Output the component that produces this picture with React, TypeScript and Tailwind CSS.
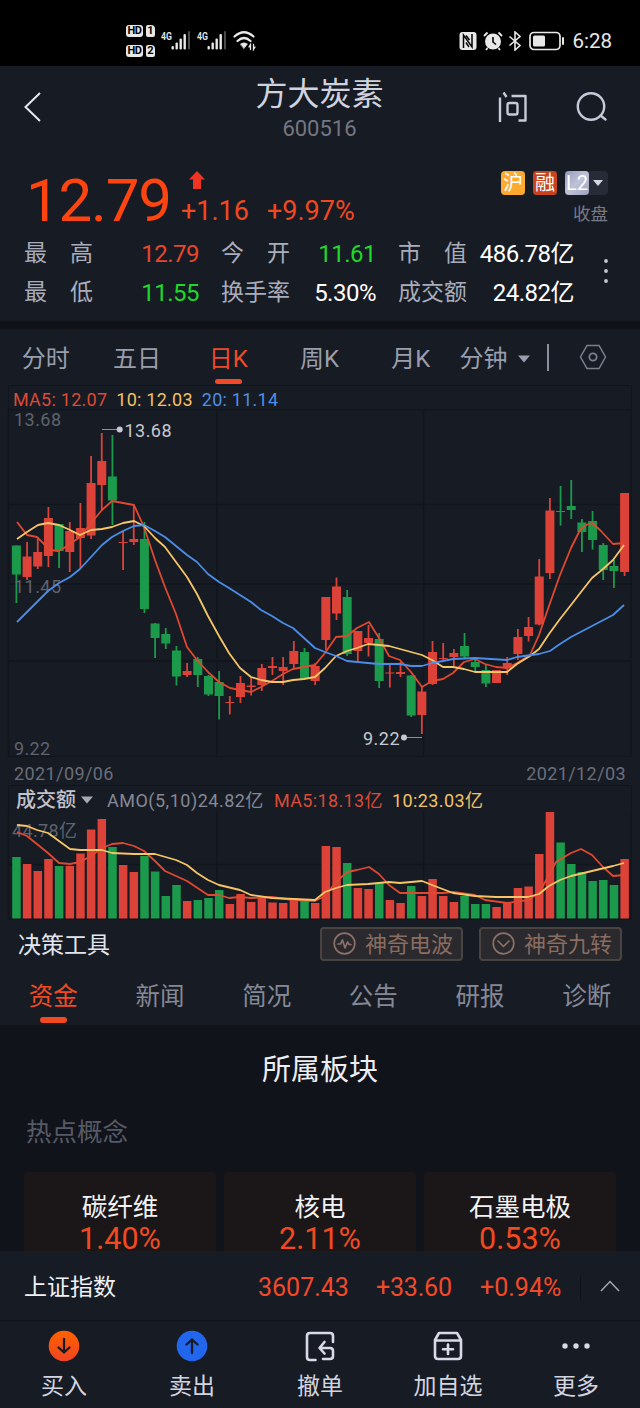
import { clsx } from 'clsx';

type Tone = 'r' | 'g';

// high, body top, body bottom, low, tone, top of the volume bar
type Candle = [number, number, number, number, Tone, number];

const RED = '#dc4238';
const GREEN = '#1c9a4b';

const CANDLES: Candle[] = [
  [545.5, 545.5, 574.5, 603, 'g', 857],
  [542, 556.5, 577, 580, 'r', 864],
  [538, 552, 566.5, 569, 'r', 871],
  [507, 518, 556, 567, 'r', 859],
  [524, 524, 551, 568, 'g', 866],
  [522, 531, 552, 572, 'r', 866],
  [503, 528, 538, 568, 'r', 853.5],
  [456, 483, 535.5, 539, 'r', 829.5],
  [433, 461, 485, 510, 'r', 819],
  [435, 476.5, 500.5, 525, 'g', 847],
  [531, 542, 543, 570, 'r', 865],
  [505, 539, 542, 545, 'r', 872],
  [522, 539, 609, 613, 'g', 856],
  [623, 623.5, 638, 658, 'g', 871.5],
  [628, 634, 643.5, 649, 'g', 896],
  [646, 650.5, 676.5, 685.5, 'g', 885],
  [663, 671, 675, 677, 'r', 901],
  [657, 659, 675, 687, 'g', 900],
  [675, 676, 694.5, 696, 'g', 898],
  [671, 682, 696, 719.5, 'g', 890],
  [696, 702, 703, 714.5, 'r', 904],
  [676, 683, 697, 703, 'r', 894],
  [677, 685.5, 687, 695.5, 'r', 902],
  [664, 668, 685, 691, 'r', 896],
  [657, 666, 668, 675, 'r', 902.5],
  [657, 667, 671, 685, 'r', 903],
  [641, 651, 664, 668, 'r', 898],
  [648, 652, 679, 679, 'g', 901],
  [663, 666, 681, 685, 'r', 903],
  [597, 597, 640, 650, 'r', 846],
  [577.5, 586.5, 613.5, 620, 'r', 847],
  [590, 597, 654, 656, 'g', 863],
  [631, 631, 651, 661, 'r', 888],
  [625, 638, 643, 656.5, 'r', 889],
  [633, 639, 681, 688, 'g', 883],
  [665, 672.5, 673.5, 687.5, 'r', 900],
  [662, 672, 674, 677, 'r', 903],
  [675, 675.5, 715.5, 717, 'g', 886],
  [687, 691.5, 715, 734, 'r', 896],
  [641, 652, 684, 685, 'r', 879],
  [643, 658, 659, 660, 'r', 896],
  [649, 653, 657, 666, 'r', 902],
  [633, 646, 656.5, 658, 'g', 896],
  [660, 662, 667, 671, 'g', 904],
  [665, 670, 683.5, 687, 'g', 904],
  [670, 670, 683, 683, 'r', 907],
  [657, 663, 668.5, 675, 'r', 902],
  [629, 637, 654, 660, 'r', 888],
  [617, 627, 636, 641.5, 'r', 886.5],
  [559, 576.5, 624.5, 625.5, 'r', 854],
  [498, 510.5, 573, 579, 'r', 812],
  [486, 511, 512, 525.5, 'g', 842.5],
  [480, 506, 510, 519, 'g', 864],
  [519, 522.5, 532, 552, 'g', 872],
  [511, 521, 540, 549.5, 'g', 881],
  [543, 545, 570, 580, 'g', 880],
  [560, 566, 571, 588, 'g', 885],
  [493, 493, 572, 576, 'r', 859],
];

const MA5 =
  '17,522 27,535 37,537 50,550 58,551 64,548 80,537 91,523 102,510 112,501 134,505 144,527 155,560 165,587 176,614 187,647 197,660 208,672 219,682 230,688 240,690 251,692 261,687 272,681 283,674 293,669 304,667 315,665 325,653 336,637 347,636 357,628 369,622 379,638 389,656 400,660 411,672 422,687 432,681 443,679 453,673 464,662 475,659 485,664 496,667 507,668 517,663 530,655 539,635 549,606 560,575 571,548 580,530 586,525 592,523 600,530 613,544 624,543';
const MA10 =
  '17,539 27,532 38,525 48,523 59,525 70,530 80,535 91,530 102,529 112,527 123,523 134,521 144,526 155,538 165,547 176,562 187,577 197,594 208,616 219,636 229,653 240,668 251,677 261,680 272,682 283,682 293,680 304,679 315,677 325,668 336,656 347,651 357,648 368,644 379,645 389,646 400,649 411,652 422,655 432,660 443,667 453,667 464,669 475,672 485,672 507,672 517,664 530,656 539,649 549,634 560,619 571,605 581,592 592,578 603,569 613,560 624,545';
const MA20 =
  '17,622 27,612 48,591 59,583 70,577 80,569 91,557 102,545 112,537 123,531 134,526 144,525 155,531 165,537 176,546 187,555 197,562 208,574 219,582 229,588 240,595 251,602 261,610 272,616 283,623 293,628 304,638 315,648 325,652 336,656 347,661 368,663 379,664 400,664 411,666 422,666 432,663 443,661 453,659 475,658 507,660 517,657 539,654 550,651 560,644 571,637 592,626 613,615 624,605';
const VOL5 =
  '17,832 27,836 48,853 59,863 70,864 80,862 91,856 102,848 112,844 123,843 134,846 144,851 155,861 165,871 187,881 208,895 219,895 229,898 240,897 251,898 272,897 293,900 315,901 325,896 336,882 347,872 357,870 369,867 379,874 389,885 400,893 443,893 453,892 475,895 485,900 507,903 528,900 539,893 549,875 556,862 571,853 581,849 592,855 603,867 613,876 624,875';
const VOL10 =
  '17,825 27,826 37,830 48,833 59,841 70,849 80,850 102,850 112,853 134,854 155,854 176,860 187,865 197,873 208,880 219,885 240,890 251,895 272,898 315,900 325,892 336,888 347,885 368,884 389,882 400,883 422,881 432,885 453,893 475,896 496,897 528,897 539,894 549,886 560,880 571,876 592,871 613,866 624,863';

const candleX = (i: number) => 16.4 + i * 10.67;

function Line({ points, color }: { points: string; color: string }) {
  return <polyline points={points} fill="none" stroke={color} strokeWidth="1.8" strokeLinejoin="round" />;
}

function KLineChart() {
  return (
    <svg width="640" height="348" viewBox="0 409 640 348" className="block">
      <path d="M8.5 409V757M217 409V757M423.5 409V757M631 409V757M8 409.5H631M8 504.5H631M8 584H631M8 661H631M8 756.5H631" stroke="#12151c" strokeWidth="1.4" fill="none" />
      {CANDLES.map(([high, top, bottom, low, tone], i) => {
        const x = candleX(i);
        const color = tone === 'r' ? RED : GREEN;
        return (
          <g key={i} fill={color}>
            <rect x={x - 0.9} y={high} width="1.8" height={low - high} />
            <rect x={x - 4.5} y={top} width="9" height={bottom - top} />
          </g>
        );
      })}
      <g fontSize="18" fill="#5f626d">
        <text x="14" y="425.500" textLength="47">13.68</text>
        <text x="14" y="592.500" textLength="47">11.45</text>
        <text x="14" y="754.5" textLength="36">9.22</text>
      </g>
      <Line points={MA5} color="#e0492f" />
      <Line points={MA10} color="#f6c566" />
      <Line points={MA20} color="#4a8ee8" />
      <path d="M102 429.5H119M404 737.5H422" stroke="#8b8e98" />
      <circle cx="119.7" cy="429.5" r="3" fill="#c6c9d3" />
      <circle cx="404" cy="737.5" r="3" fill="#c6c9d3" />
      <g fontSize="18" fill="#c6c9d3">
        <text x="124.5" y="437" textLength="47">13.68</text>
        <text x="363" y="744.5" textLength="36.5">9.22</text>
      </g>
    </svg>
  );
}

function VolumeChart() {
  return (
    <svg width="640" height="109" viewBox="0 811 640 109" className="block">
      <path d="M8.5 811V919M217 811V919M423.5 811V919M631 811V919M8 864.5H631M8 919H631" stroke="#12151c" strokeWidth="1.4" fill="none" />
      {CANDLES.map(([, , , , tone, top], i) => (
        <rect key={i} x={candleX(i) - 4.2} y={top} width="8.5" height={918.5 - top} fill={tone === 'r' ? RED : GREEN} />
      ))}
      <text x="12" y="837" fontSize="18" fill="#5f626d" textLength="65">44.78亿</text>
      <Line points={VOL5} color="#e0492f" />
      <Line points={VOL10} color="#f6c566" />
    </svg>
  );
}

function Signal() {
  return (
    <svg width="31" height="22" viewBox="0 0 31 22" fill="#e8e8e8">
      <text x="0" y="9.5" fontSize="11.5" fontWeight="600" textLength="11" lengthAdjust="spacingAndGlyphs">4G</text>
      <rect x="10.5" y="16" width="2.4" height="3.5" rx="1" />
      <rect x="14.5" y="12.5" width="2.4" height="7" rx="1" />
      <rect x="18.5" y="8.5" width="2.4" height="11" rx="1" />
      <rect x="22.5" y="4" width="2.4" height="15.5" rx="1" />
      <rect x="27" y="1" width="2" height="18.5" rx="0.9" fill="#4b4b4b" />
    </svg>
  );
}

function StatusBar() {
  return (
    <div className="flex h-[66px] items-start bg-black text-[#e8e8e8]">
      <div className="ml-[126px] mt-[25px] flex flex-col gap-2">
        {['1', '2'].map((n) => (
          <div key={n} className="flex gap-[3px] text-[11px] leading-[12px] font-bold text-black">
            <span className="w-[17px] rounded-[3px] bg-[#e8e8e8] text-center tracking-[-.4px]">HD</span>
            <span className="w-[9px] rounded-[2px] rounded-tr-[4px] bg-[#e8e8e8] text-center">{n}</span>
          </div>
        ))}
      </div>
      <div className="ml-[6px] mt-[30px] flex gap-[5px]">
        <Signal />
        <Signal />
        <svg width="24" height="22" viewBox="0 0 24 22" fill="none" stroke="#e8e8e8" strokeLinecap="round">
          <path d="M1.500 6.5Q11 -2 20.500 6.5M4.500 11Q11 5 17.500 11" strokeWidth="2.2" />
          <path d="M7.500 14Q11 11.500 14.500 14L11 18.500Z" fill="#e8e8e8" strokeWidth="0.5" />
          <path d="M17.500 19.5V14.5L16 17M20.5 14.5V19.5L22 17" strokeWidth="1.3" />
        </svg>
      </div>
      <div className="ml-auto mr-7 mt-[29px] flex items-center">
        <svg width="18" height="20" viewBox="0 0 18 20">
          <rect x="0.5" y="1" width="17" height="18" rx="3" fill="#e8e8e8" />
          <path d="M4.5 17V4L13 16V3M7 4.5L10.5 9M7 11.5L10 16" fill="none" stroke="#000" strokeWidth="1.5" />
        </svg>
        <svg width="20" height="20" viewBox="0 0 20 20" className="ml-[6px]">
          <circle cx="10" cy="10.5" r="8" fill="#e8e8e8" />
          <path d="M10 6V11L13 13.5" fill="none" stroke="#000" strokeWidth="1.6" />
          <path d="M1 5L4.5 1.5M19 5L15.5 1.5M4.5 17L3 19M15.5 17L17 19" stroke="#e8e8e8" strokeWidth="1.8" />
        </svg>
        <svg width="14" height="20" viewBox="0 0 14 20" fill="none" stroke="#e8e8e8" strokeWidth="1.6" className="ml-[5px]">
          <path d="M1.5 5.5L12 14.5L7 19V1L12 5.5L1.5 14.5" />
        </svg>
        <svg width="36" height="20" viewBox="0 0 36 20" className="ml-[7px]">
          <rect x="1" y="1.5" width="30" height="17" rx="4" fill="none" stroke="#e8e8e8" strokeWidth="1.7" />
          <rect x="4" y="4.5" width="12" height="11" rx="1.5" fill="#e8e8e8" />
          <rect x="33" y="6" width="2" height="8" rx="1" fill="#e8e8e8" />
        </svg>
        <span className="ml-[7px] text-[20.5px] leading-[24px]">6:28</span>
      </div>
    </div>
  );
}

function Header() {
  return (
    <header className="flex h-[84px] items-start justify-between pl-6 pr-8">
      <svg width="18" height="32" viewBox="0 0 18 32" fill="none" stroke="#e6e8ee" strokeWidth="2" className="mt-[25px] mr-[99px]">
        <path d="M16 2L1.5 16L16 30" />
      </svg>
      <div className="flex flex-col items-center pt-[9px]">
        <h1 className="text-[32px] leading-[38px] text-[#d0d3df]">方大炭素</h1>
        <div className="mt-[5px] text-[22px] leading-[22px] text-[#737783]">600516</div>
      </div>
      <div className="mt-[25px] flex gap-[48px]">
        <svg width="30" height="32" viewBox="0 0 30 32" fill="none" stroke="#c6c9d8" strokeWidth="2.4" strokeLinejoin="round">
          <path d="M2 6.5V31M5.5 1.5L8.5 6M13.500 5H27.5V29.5H20.5" />
          <rect x="9.5" y="12" width="10" height="11.5" rx="2" />
        </svg>
        <svg width="32" height="32" viewBox="0 0 32 32" fill="none" stroke="#c6c9d8" strokeWidth="2.4" strokeLinecap="round">
          <circle cx="15" cy="15.5" r="13.2" />
          <path d="M24.5 24.5L29.5 28.5" />
        </svg>
      </div>
    </header>
  );
}

function Quote() {
  const stats = [
    ['最高', '12.79', 'text-[#e8462a]'],
    ['今开', '11.61', 'text-[#1fd82b]'],
    ['市值', '486.78亿', 'text-white'],
    ['最低', '11.55', 'text-[#1fd82b]'],
    ['换手率', '5.30%', 'text-white'],
    ['成交额', '24.82亿', 'text-white'],
  ];
  return (
    <section className="h-[171px] pl-6">
      <div className="flex h-[84px] text-[#fd4411]">
        <div className="mt-[21px] w-[148px] pl-[2px] text-[60px] leading-[60px] tracking-[-1.2px]">12.79</div>
        <div className="ml-[9px] pt-[21px]">
          <svg width="18" height="18" viewBox="0 0 18 18" fill="#ee3524" className="ml-[7px]">
            <path d="M9 0L17 8.5H13V18H5V8.5H1Z" />
          </svg>
          <div className="mt-[8px] flex gap-[18px] text-[27px] leading-[28px] text-[#f24820]">
            <span>+1.16</span>
            <span>+9.97%</span>
          </div>
        </div>
        <div className="ml-auto mr-[32px] flex flex-col items-end pt-[21px]">
          <div className="flex h-6 items-center rounded bg-[#272b38] text-[20px] leading-6 text-white">
            <span className="w-6 rounded bg-[#fcab30] text-center">沪</span>
            <span className="w-2 self-stretch bg-[#171b24]" />
            <span className="w-6 rounded bg-[#c8421c] text-center">融</span>
            <span className="w-2 self-stretch bg-[#171b24]" />
            <span className="w-6 rounded bg-linear-to-br from-[#959bbb] via-[#bfc3d8] to-[#9ba0bf] text-center">L2</span>
            <svg width="19" height="8" viewBox="0 0 19 8" fill="#d5d7df">
              <path d="M4 1H14L9 7Z" />
            </svg>
          </div>
          <span className="mt-[9px] text-[17.5px] leading-[20px] text-[#767a86]">收盘</span>
        </div>
      </div>
      <div className="flex">
        <div className="grid grid-cols-[175px_155px_176px] gap-x-[22px] gap-y-[1px] pt-[1px] text-[24px] leading-[38px]">
          {stats.map(([label, value, color]) => (
            <div key={label} className="flex justify-between whitespace-nowrap">
              <span className="flex w-[69px] justify-between text-[23px] text-[#a9adbb]">
                {label.split('').map((ch) => (
                  <span key={ch}>{ch}</span>
                ))}
              </span>
              <span className={clsx('tracking-[-.5px]', color)}>{value}</span>
            </div>
          ))}
        </div>
        <svg width="6" height="28" viewBox="0 0 6 28" fill="#c5c8d2" className="ml-auto mr-[31px] mt-[23px]">
          <circle cx="3" cy="4" r="1.9" />
          <circle cx="3" cy="14" r="1.9" />
          <circle cx="3" cy="24" r="1.9" />
        </svg>
      </div>
    </section>
  );
}

function PeriodTabs() {
  const tabs = ['分时', '五日', '日K', '周K', '月K'];
  return (
    <nav className="flex h-[56px] text-[24px] text-[#9a9eac]">
      {tabs.map((t) => (
        <div key={t} className={clsx('flex w-[91.3px] flex-col items-center', t === '日K' && 'text-[#f04a28]')}>
          <span className="mt-[11px] leading-[38px]">{t}</span>
          {t === '日K' && <span className="mt-[0.5px] h-[5.5px] w-[27px] rounded-full bg-[#f04a28]" />}
        </div>
      ))}
      <div className="ml-[3px] flex h-[56px] items-center">
        <span className="pt-[3px]">分钟</span>
        <svg width="12" height="8" viewBox="0 0 12 8" fill="#9a9eac" className="ml-[11px] mt-[4px]">
          <path d="M0 0.5H12L6 7.5Z" />
        </svg>
        <span className="ml-[17px] h-[27px] w-[1.5px] bg-[#8b8f9b]" />
        <svg width="28" height="26" viewBox="0 0 28 26" fill="none" stroke="#7c808c" strokeWidth="1.5" className="ml-[30px]">
          <path d="M8 1.5H20L26.5 13L20 24.5H8L1.5 13Z" />
          <circle cx="14" cy="13" r="3.7" strokeWidth="1.8" />
        </svg>
      </div>
    </nav>
  );
}

function Charts() {
  return (
    <section>
      <div className="mx-2 flex h-6 items-center gap-[9px] border border-b-0 border-[#12151c] pl-[4px] pt-[3px] text-[18px] tracking-[.25px]">
        <span className="text-[#dd4a36]">MA5: 12.07</span>
        <span className="text-[#f3c165]">10: 12.03</span>
        <span className="text-[#4c8fe6]">20: 11.14</span>
      </div>
      <KLineChart />
      <div className="flex h-7 items-center justify-between px-[14px] pt-[4px] text-[18px] tracking-[.4px] text-[#6b6e79]">
        <span>2021/09/06</span>
        <span>2021/12/03</span>
      </div>
      <div className="mx-2 flex h-[26px] items-center border border-b-0 border-[#12151c] pl-[7px] pt-[3px] text-[18px]">
        <span className="text-[20px] font-medium text-[#c0c3cd]">成交额</span>
        <svg width="12" height="8" viewBox="0 0 12 8" fill="#a7aab5" className="ml-[5px]">
          <path d="M0 0.5H12L6 7.5Z" />
        </svg>
        <span className="ml-[14px] w-[158px] whitespace-nowrap tracking-[.5px] text-[#858894]">AMO(5,10)24.82亿</span>
        <span className="ml-[9px] w-[109px] whitespace-nowrap tracking-[.35px] text-[#dd4a36]">MA5:18.13亿</span>
        <span className="ml-[9px] whitespace-nowrap tracking-[.4px] text-[#f3c165]">10:23.03亿</span>
      </div>
      <VolumeChart />
    </section>
  );
}

function ToolButton({ label, icon }: { label: string; icon: string }) {
  return (
    <button className="flex h-[34px] w-[143px] items-center rounded-[4px] border-2 border-[#494442] bg-[#2a292d] pl-[11px] text-[22px] leading-[30px] text-[#8a6d60]">
      <svg width="23" height="23" viewBox="0 0 23 23" fill="none" stroke="#8a7068" strokeWidth="1.7" strokeLinejoin="round" strokeLinecap="round" className="mr-[9px]">
        <circle cx="11.5" cy="11.5" r="10.3" />
        <path d={icon} />
      </svg>
      <span className="pt-[2px]">{label}</span>
    </button>
  );
}

function Tools() {
  return (
    <div className="flex h-[46px] items-center px-[18px] pb-[2px] pt-[3px]">
      <span className="mr-auto pt-[5px] text-[23px] leading-[34px] text-[#e4e6ee]">决策工具</span>
      <div className="flex gap-[16px]">
        <ToolButton label="神奇电波" icon="M5 12H7.5L9.5 8L12 16L14.5 10L16 12.5H18" />
        <ToolButton label="神奇九转" icon="M6 9L11.5 14.5L17 9" />
      </div>
    </div>
  );
}

function InfoTabs() {
  const tabs = ['资金', '新闻', '简况', '公告', '研报', '诊断'];
  return (
    <nav className="grid h-[59px] grid-cols-6 text-[24.5px] text-[#858995]">
      {tabs.map((t, i) => (
        <div key={t} className={clsx('flex flex-col items-center pt-[12px]', i === 0 && 'text-[#f04a22]')}>
          <span className="leading-[38px]">{t}</span>
          {i === 0 && <span className="mt-[1px] h-[6px] w-[27px] rounded-full bg-[#f04a22]" />}
        </div>
      ))}
    </nav>
  );
}

function Sectors() {
  const cards = [
    { name: '碳纤维', change: '1.40%' },
    { name: '核电', change: '2.11%' },
    { name: '石墨电极', change: '0.53%' },
  ];
  return (
    <section className="h-[226px] bg-[#10131a] px-6">
      <h2 className="pt-[24px] text-center text-[29px] leading-[42px] text-[#eceef3]">所属板块</h2>
      <h3 className="mt-[23px] pl-[2px] text-[25.5px] leading-[36px] text-[#565a66]">热点概念</h3>
      <div className="mt-[22px] grid grid-cols-3 gap-[8px]">
        {cards.map((c) => (
          <div key={c.name} className="flex h-[79px] flex-col items-center rounded-t bg-[#1b1719] pt-[17px]">
            <span className="text-[25.5px] leading-[36px] text-[#f2f2f4]">{c.name}</span>
            <span className="text-[30.5px] leading-[28px] text-[#f24a20]">{c.change}</span>
          </div>
        ))}
      </div>
    </section>
  );
}

function IndexBar() {
  return (
    <div className="flex h-[69px] items-center pl-6 pr-5 pt-[4px] text-[25px] text-[#f24a28]">
      <span className="mr-auto pt-[2px] text-[23px] text-[#f0f1f5]">上证指数</span>
      <span className="w-[118px]">3607.43</span>
      <span className="w-[104px] tracking-[-.2px]">+33.60</span>
      <span className="w-[82px]">+0.94%</span>
      <span className="ml-[18px] h-[26px] w-px bg-[#0f1219]" />
      <svg width="20" height="12" viewBox="0 0 20 12" fill="none" stroke="#a5a8b3" strokeWidth="1.5" className="ml-[19px] -mt-1">
        <path d="M1 11L10 1.5L19 11" />
      </svg>
    </div>
  );
}

function ActionBar() {
  const line = { fill: 'none', stroke: '#d8dae6', strokeWidth: 2.6, strokeLinecap: 'round', strokeLinejoin: 'round' } as const;
  const items = [
    {
      label: '买入',
      icon: (
        <>
          <defs>
            <linearGradient id="buy" x1="0" y1="0" x2="0" y2="1">
              <stop stopColor="#ff6200" />
              <stop offset="1" stopColor="#f04424" />
            </linearGradient>
          </defs>
          <circle cx="16" cy="16" r="15.3" fill="url(#buy)" />
          <path d="M16 9V22.5M10.5 17.5L16 22.5L21.5 17.5" {...line} stroke="#171b24" strokeWidth="2.3" />
        </>
      ),
    },
    {
      label: '卖出',
      icon: (
        <>
          <circle cx="16" cy="16" r="15.3" fill="#2266ee" />
          <path d="M16 23V9.5M10.5 14.5L16 9.5L21.5 14.5" {...line} stroke="#171b24" strokeWidth="2.3" />
        </>
      ),
    },
    {
      label: '撤单',
      icon: (
        <>
          <path d="M29 12V6Q29 3 26 3H6Q3 3 3 6V27Q3 30 6 30H11.5" {...line} />
          <path d="M20.5 12L15.5 18L20.5 23.5M16.5 18H26Q29 18 29 21V26Q29 29 26 29H19" {...line} />
        </>
      ),
    },
    {
      label: '加自选',
      icon: <path d="M7 3H25L29 10V26Q29 29 26 29H6Q3 29 3 26V10ZM3 10.5H29M16 14.5V24M11 19.3H21" {...line} />,
    },
    {
      label: '更多',
      icon: (
        <g fill="#d8dae6">
          <circle cx="5" cy="16" r="2.7" />
          <circle cx="16" cy="16" r="2.7" />
          <circle cx="27" cy="16" r="2.7" />
        </g>
      ),
    },
  ];
  return (
    <nav className="grid h-[88px] grid-cols-5 border-t border-[#0f1219]">
      {items.map((item, i) => (
        <div key={item.label} className="flex h-[87px] flex-col items-center pt-[9px]">
          <svg width={i < 2 ? 32 : 30} height="32" viewBox={i < 2 ? '0 0 32 32' : '1 0 30 32'}>
            {item.icon}
          </svg>
          <span className="mt-[8px] text-[23px] leading-[34px] text-[#d2d5e0]">{item.label}</span>
        </div>
      ))}
    </nav>
  );
}

export default function App() {
  return (
    <div className="h-[1408px] w-[640px] overflow-hidden bg-[#171b24] font-[Roboto,'Noto_Sans_CJK_SC',sans-serif]">
      <StatusBar />
      <Header />
      <Quote />
      <div className="h-2 bg-[#101217]" />
      <PeriodTabs />
      <Charts />
      <Tools />
      <InfoTabs />
      <Sectors />
      <IndexBar />
      <ActionBar />
    </div>
  );
}
